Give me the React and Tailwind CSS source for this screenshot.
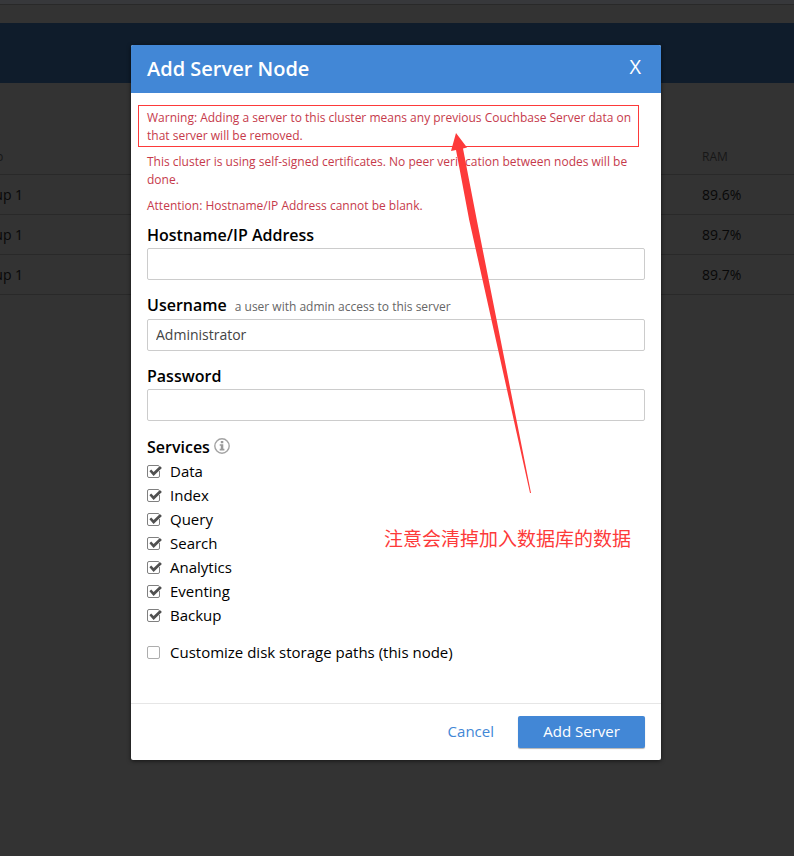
import React from "react";

const services = ["Data", "Index", "Query", "Search", "Analytics", "Eventing", "Backup"];

const nodes = [
  { group: "Group 1", ram: "89.6%" },
  { group: "Group 1", ram: "89.7%" },
  { group: "Group 1", ram: "89.7%" },
];

function CheckRow({ label, defaultChecked }) {
  return (
    <label className="flex h-6 items-center">
      <span className="grid w-[23px] items-center">
        <input
          type="checkbox"
          defaultChecked={defaultChecked}
          className="peer col-start-1 row-start-1 size-[13px] appearance-none rounded-[2px] border border-[#adadad] checked:border-[#808080]"
        />
        <svg
          viewBox="0 0 15 13"
          className="pointer-events-none invisible col-start-1 row-start-1 h-[13px] w-[15px] peer-checked:visible"
          aria-hidden="true"
        >
          <path d="M12.5 0.5v5.5" stroke="#fff" strokeWidth="1.4" />
          <path d="M2.4 6.3 4.2 4.5 6.6 6.9 12.9 1.1 14.9 3.1 6.6 11Z" fill="#505050" />
        </svg>
      </span>
      {label}
    </label>
  );
}

function Field({ id, label, hint, type = "text", defaultValue }) {
  return (
    <div className="mb-[13px]">
      <label htmlFor={id} className="mb-px block text-base leading-6 font-semibold">
        {label}
        {hint && <span className="ml-2 text-xs leading-[22px] font-normal text-[#666]">{hint}</span>}
      </label>
      <input
        id={id}
        type={type}
        defaultValue={defaultValue}
        className="block h-8 w-full rounded-xs border border-[#ccc] bg-white px-2 pb-0.5 text-sm text-[#444] outline-none"
      />
    </div>
  );
}

export default function App() {
  return (
    <div className="relative min-h-screen overflow-hidden bg-[#333] font-['Open_Sans','Noto_Sans_CJK_SC',sans-serif] text-black">
      <div className="h-[5px] border-b border-[#292929] bg-[#37383b]" />
      <div className="mt-[18px] h-[60px] bg-[#0f1c2b]" />
      <div className="-ml-[30px] pt-[51px]">
        <table className="w-full table-fixed border-collapse text-left text-sm text-[#080808]">
          <thead>
            <tr className="h-10 border-b border-[#292929] text-xs text-[#171717]">
              <th className="pt-1.5 font-normal">group</th>
              <th className="w-[92px] pt-1.5 font-normal">RAM</th>
            </tr>
          </thead>
          <tbody>
            {nodes.map((node, i) => (
              <tr key={i} className="h-10 border-b border-[#292929]">
                <td className="pt-0.5">{node.group}</td>
                <td className="pt-0.5">{node.ram}</td>
              </tr>
            ))}
          </tbody>
        </table>
      </div>

      <div className="absolute inset-0 pt-[45px] pr-0.5">
        <section
          role="dialog"
          aria-labelledby="dialog-title"
          className="relative mx-auto max-w-[530px] rounded-xs bg-white shadow-[0_1px_4px_rgba(0,0,0,0.6)]"
        >
          <header className="flex h-12 items-center justify-between rounded-t-xs bg-[#4287d6] px-4 text-white">
            <h2 id="dialog-title" className="text-xl font-semibold">
              Add Server Node
            </h2>
            <button type="button" aria-label="Close" className="px-1 pb-1 text-xl">
              X
            </button>
          </header>

          <form className="px-4 pt-4 pb-[39px]">
            <div className="mb-2 space-y-2 text-xs leading-[18px] text-[#c63a4b]">
              <p>
                Warning: Adding a server to this cluster means any previous Couchbase Server data on
                that server will be removed.
              </p>
              <p>
                This cluster is using self-signed certificates. No peer verification between nodes
                will be done.
              </p>
              <p>Attention: Hostname/IP Address cannot be blank.</p>
            </div>

            <Field id="hostname" label="Hostname/IP Address" />
            <Field
              id="username"
              label="Username"
              hint="a user with admin access to this server"
              defaultValue="Administrator"
            />
            <Field id="password" label="Password" type="password" />

            <fieldset className="mt-3.5 text-[15px]">
              <legend className="flex h-6 items-center gap-1 text-base font-semibold">
                Services
                <svg viewBox="0 0 16 16" className="mb-0.5 size-4" aria-hidden="true">
                  <circle cx="8" cy="8" r="7.2" fill="none" stroke="#a3a3a3" strokeWidth="1.4" />
                  <path
                    d="M6.8 3h2.5v2.2H6.8zM5.7 6.2h3.6v4.6h1.1v1.6H5.7v-1.6h1.1V7.8H5.7z"
                    fill="#999"
                  />
                </svg>
              </legend>
              {services.map((name) => (
                <CheckRow key={name} label={name} defaultChecked />
              ))}
            </fieldset>
            <div className="mt-[13px] text-[15px]">
              <CheckRow label="Customize disk storage paths (this node)" />
            </div>
          </form>

          <footer className="flex items-center justify-end gap-6 border-t border-[#e6e6e6] px-4 py-3 text-[15px]">
            <a href="#cancel" className="pb-0.5 text-[#4287d6]">
              Cancel
            </a>
            <button
              type="button"
              className="h-8 w-[127px] rounded-xs bg-[#4287d6] pb-0.5 text-white shadow-[0_1px_1px_rgba(0,0,0,0.3)]"
            >
              Add Server
            </button>
          </footer>

          <div className="pointer-events-none absolute top-[60px] right-[22px] left-[7px] h-[42px] border border-[#fd3a3a]" />
          <svg
            viewBox="0 0 80 360"
            className="pointer-events-none absolute top-[88px] left-[320px] h-[360px] w-20"
            aria-hidden="true"
          >
            <path d="M5 0 16 14.5 12 15.5 25.8 87 80 360 79 360 18.2 87 5 17 0 18Z" fill="#fd3a3a" />
          </svg>
          <p className="pointer-events-none absolute top-[479px] left-[253px] text-[19px] leading-[30px] whitespace-nowrap text-[#fd3a3a]">
            注意会清掉加入数据库的数据
          </p>
        </section>
      </div>
    </div>
  );
}
